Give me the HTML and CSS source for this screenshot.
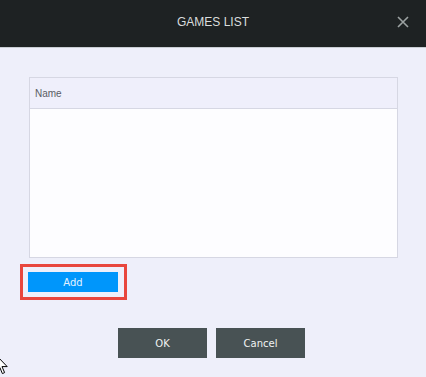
FILE: index.html
```html
<!DOCTYPE html>
<html>
<head>
<meta charset="utf-8">
<link rel="stylesheet" href="styles.css">
</head>
<body>
<div class="dialog">
  <header class="titlebar">
    <span class="title">GAMES LIST</span>
    <svg class="close" width="12" height="12" viewBox="0 0 12 12"><path d="M1 1 L11 11 M11 1 L1 11" stroke="#9ca2a2" stroke-width="1.6" fill="none"/></svg>
  </header>
  <main class="content">
    <div class="table">
      <div class="thead">Name</div>
      <div class="tbody"></div>
    </div>
    <div class="highlight">
      <button class="btn-add">Add</button>
    </div>
    <div class="actions">
      <button class="btn-dark">OK</button>
      <button class="btn-dark">Cancel</button>
    </div>
  </main>
  <svg class="cursor" width="14" height="22" viewBox="0 0 14 22"><path d="M1 1 L1 17 L4.8 13.4 L7.4 19.6 L9.6 18.6 L7 12.6 L12.2 12.6 Z" fill="#fff" stroke="#000" stroke-width="1"/></svg>
</div>
</body>
</html>
```
FILE: styles.css
```css
html, body {
  margin: 0;
  padding: 0;
}
body {
  width: 426px;
  height: 377px;
  overflow: hidden;
  background: #eeeffa;
  font-family: "Liberation Sans", Arial, sans-serif;
}
.dialog {
  position: relative;
  width: 426px;
  height: 377px;
  display: flex;
  flex-direction: column;
}
.titlebar {
  height: 47px;
  background: #1e2223;
  border-bottom: 1px solid #c9cdd3;
  position: relative;
  display: flex;
  align-items: center;
  justify-content: center;
  flex: none;
}
.title {
  color: #d9dddd;
  font-size: 12px;
  margin-top: -4px;
}
.close {
  position: absolute;
  right: 17px;
  top: 16px;
}
.content {
  display: flex;
  flex-direction: column;
  padding: 29px 0 0 20px;
}
.table {
  margin-left: 9px;
  width: 367px;
  height: 179px;
  border: 1px solid #d6d7e3;
  display: flex;
  flex-direction: column;
}
.thead {
  height: 30px;
  background: #efeffb;
  border-bottom: 1px solid #d6d7e3;
  font-size: 10px;
  color: #5a5c63;
  display: flex;
  align-items: center;
  padding-left: 5px;
  flex: none;
}
.tbody {
  flex: 1;
  background: #fdfdff;
}
.highlight {
  margin-top: 6px;
  border: 3px solid #e8463d;
  padding: 5px 0 0 5px;
  width: 96px;
  height: 25px;
}
.btn-add {
  width: 90px;
  height: 20px;
  margin: 0;
  padding: 0;
  border: none;
  background: #0096fb;
  color: #e4f2ff;
  font-family: "DejaVu Sans", Verdana, sans-serif;
  font-size: 10px;
  display: block;
}
.actions {
  margin-top: 28px;
  display: flex;
  gap: 9px;
  padding-left: 98px;
}
.btn-dark {
  width: 89px;
  height: 30px;
  margin: 0;
  padding: 0;
  border: none;
  background: #485254;
  color: #f0f2f2;
  font-family: "DejaVu Sans", Verdana, sans-serif;
  font-size: 10px;
}
.cursor {
  position: absolute;
  left: -5px;
  top: 354px;
}
```
